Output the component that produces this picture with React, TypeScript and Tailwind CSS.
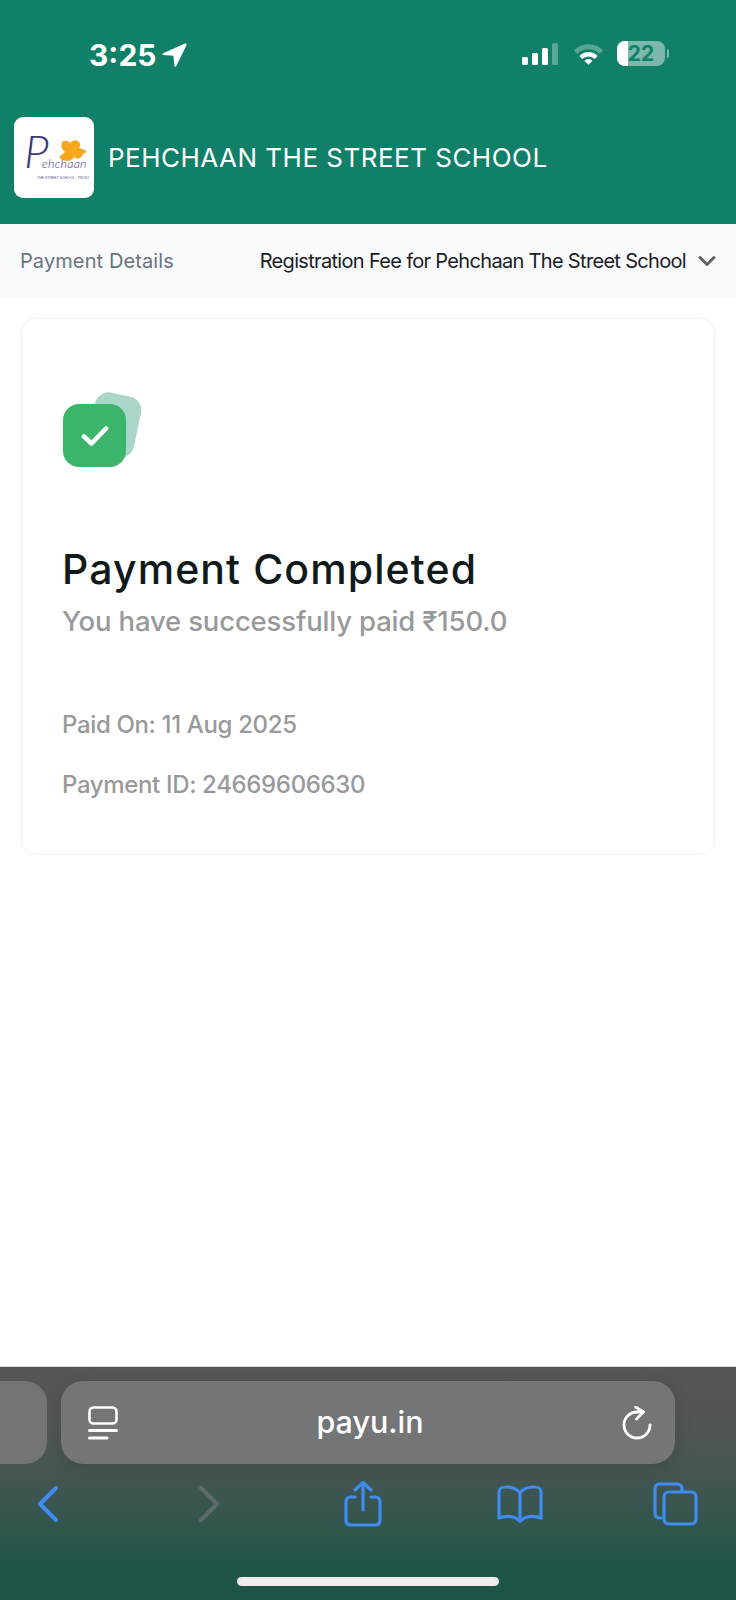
import { ChevronDown } from "lucide-react";

function NavArrow() {
  return (
    <svg width="25" height="25" viewBox="0 0 25 25" fill="white">
      <path d="M23 0.6 L1.2 10.2 Q-0.6 11.4 1.4 12 L11.4 12.8 L12.4 22.8 Q13 24.8 14.2 23.2 L24.6 2 Q25 0 23 0.6 Z" />
    </svg>
  );
}

function Signal() {
  return (
    <div className="mr-[2px] flex items-end gap-[4px]">
      <span className="h-[8px] w-[6px] rounded-[1.5px] bg-white" />
      <span className="h-[12px] w-[6px] rounded-[1.5px] bg-white" />
      <span className="h-[17px] w-[6px] rounded-[1.5px] bg-white" />
      <span className="h-[22px] w-[6px] rounded-[1.5px] bg-white/30" />
    </div>
  );
}

function Wifi() {
  return (
    <svg width="31" height="23" viewBox="0 0 32 23">
      <path d="M1 8.2 A21 21 0 0 1 31 8.2 L27.6 12 A16.4 16.4 0 0 0 4.4 12 Z" fill="white" fillOpacity="0.3" />
      <path d="M6.6 14 A13.2 13.2 0 0 1 25.4 14 L22.4 17.2 A9 9 0 0 0 9.6 17.2 Z" fill="white" />
      <path d="M11.8 19 A6 6 0 0 1 20.2 19 L16 23 Z" fill="white" />
    </svg>
  );
}

function Battery() {
  return (
    <div className="flex items-center gap-[2px]">
      <div className="relative flex h-[25px] w-[48px] items-center justify-center overflow-hidden rounded-[8px] bg-white/45">
        <span className="absolute inset-y-0 left-0 w-[11px] bg-white" />
        <span className="relative text-[21px] leading-none font-bold text-[#118069]">22</span>
      </div>
      <span className="h-[9px] w-[2px] rounded-r-full bg-white/45" />
    </div>
  );
}

function Logo() {
  return (
    <div className="relative h-[81px] w-[80px] shrink-0 overflow-hidden rounded-[9px] bg-white">
      <svg width="29" height="22" viewBox="0 0 29 22" className="absolute top-[23px] left-[44px]">
        <path
          d="M4 2 Q9 -1 12 3 Q15 -1 20 1 Q24 4 21 8 Q27 9 29 12 Q25 13 24 16 Q21 21 16 17 Q14 21 9 21 Q3 20 1 17 Q5 14 7 12 Q2 8 4 2 Z"
          fill="#f7a91d"
        />
      </svg>
      <p className="absolute top-[11px] left-[10px] font-['Lato',sans-serif] text-[12.5px] leading-none font-light tracking-[0.2px] whitespace-nowrap text-[#3d3a78] italic first-letter:mr-[-7px] first-letter:text-[46px]">
        Pehchaan
      </p>
      <span className="absolute top-[60px] left-[23px] font-['Liberation_Sans',sans-serif] text-[3.5px] leading-none whitespace-nowrap text-[#55527f]">
        THE STREET SCHOOL · TRUST
      </span>
    </div>
  );
}

function CheckBadge() {
  return (
    <div className="relative ml-[1px] h-[64px] w-[64px]">
      <div className="absolute top-[-10px] left-[28px] h-[62px] w-[47px] rotate-[12deg] rounded-[14px] bg-[#a9d5cb]" />
      <div className="relative flex h-[63px] w-[63px] items-center justify-center rounded-[16px] bg-[#3cb56c]">
        <svg width="28" height="22" viewBox="0 0 28 22" fill="none" stroke="white" strokeWidth="4.6" strokeLinecap="round" strokeLinejoin="round">
          <path d="M3 11.5 L10.5 18.5 L25 3.5" />
        </svg>
      </div>
    </div>
  );
}

function TabsIcon() {
  return (
    <svg width="30" height="34" viewBox="0 0 30 34" fill="none" stroke="white" strokeLinecap="round">
      <rect x="1.5" y="1.5" width="27" height="16" rx="4" strokeWidth="2.6" />
      <path d="M1.5 24.5 H28.5" strokeWidth="3" />
      <path d="M1.5 32 H19" strokeWidth="3" />
    </svg>
  );
}

function Reload() {
  return (
    <svg width="30" height="34" viewBox="0 0 30 34" fill="none" stroke="white" strokeWidth="2.8" strokeLinecap="round" strokeLinejoin="round">
      <path d="M21 6 H15 A13 13 0 1 0 28 19" />
      <path d="M13.5 1 L21.5 6 L14.5 13" />
    </svg>
  );
}

function Share() {
  return (
    <svg width="38" height="46" viewBox="0 0 38 46" fill="none" stroke="#3f8bef" strokeWidth="3.2" strokeLinecap="round" strokeLinejoin="round">
      <path d="M11 16 H7 Q2 16 2 21 V39 Q2 44 7 44 H31 Q36 44 36 39 V21 Q36 16 31 16 H27" />
      <path d="M19 29 V2" />
      <path d="M11 9 L19 1.5 L27 9" />
    </svg>
  );
}

function Book() {
  return (
    <svg width="46" height="38" viewBox="0 0 46 38" fill="none" stroke="#3f8bef" strokeWidth="3.2" strokeLinecap="round" strokeLinejoin="round">
      <path d="M23 8 C20 3 14 1.8 8 2 C4.5 2 2 4 2 7 V33 C9 30 18 31 23 36 C28 31 37 30 44 33 V7 C44 4 41.5 2 38 2 C32 1.8 26 3 23 8 Z" />
      <path d="M23 8 V36" />
    </svg>
  );
}

function Copy() {
  return (
    <svg width="45" height="44" viewBox="0 0 45 44" fill="none" stroke="#3f8bef" strokeWidth="3.2" strokeLinejoin="round">
      <path d="M9 36 H7 Q2 36 2 31 V7 Q2 2 7 2 H24 Q29 2 29 7 V9" />
      <rect x="11" y="10" width="32" height="32" rx="5" />
    </svg>
  );
}

function ChevronNav({ color, flip }: { color: string; flip?: boolean }) {
  return (
    <svg width="24" height="38" viewBox="0 0 24 38" fill="none" stroke={color} strokeWidth="4" strokeLinecap="round" strokeLinejoin="round">
      <path d={flip ? "M4 3 L20 19 L4 35" : "M20 3 L4 19 L20 35"} />
    </svg>
  );
}

export default function App() {
  return (
    <div className="flex h-[1600px] w-[736px] flex-col overflow-hidden bg-white font-['Inter',sans-serif]">
      <header className="flex h-[224px] shrink-0 flex-col bg-[#118069] text-white">
        <div className="flex h-[117px] items-start justify-between pt-[38px] pr-[67px] pl-[89px]">
          <div className="flex items-center gap-[6px]">
            <span className="text-[30px] leading-[34px] font-bold">3:25</span>
            <NavArrow />
          </div>
          <div className="flex items-center gap-[13px] pt-[3px]">
            <Signal />
            <Wifi />
            <Battery />
          </div>
        </div>
        <div className="flex items-center gap-[14px] pl-[14px]">
          <Logo />
          <span className="text-[26px] leading-none font-normal tracking-[0.48px]">PEHCHAAN THE STREET SCHOOL</span>
        </div>
      </header>

      <div className="flex h-[74px] shrink-0 items-center justify-between bg-[#f8fafc] pr-[15px] pl-[20px]">
        <span className="text-[20px] tracking-[0.1px] text-[#6b7280]">Payment Details</span>
        <div className="flex items-center gap-[7px]">
          <span className="text-[20px] tracking-[-0.68px] text-[#1b2024]">Registration Fee for Pehchaan The Street School</span>
          <ChevronDown size={28} strokeWidth={2.6} className="text-[#5f6368]" />
        </div>
      </div>

      <main className="flex-1 px-[21px] pt-[20px]">
        <section className="flex h-[537px] flex-col rounded-[14px] border border-[#eff1f3] bg-white pt-[85px] pl-[40px]">
          <CheckBadge />
          <h1 className="mt-[76px] text-[41px] leading-[50px] font-medium tracking-[1.1px] text-[#111a1a]">Payment Completed</h1>
          <p className="mt-[9px] text-[27.5px] leading-[36px] font-medium tracking-[-0.17px] text-[#98999b]">You have successfully paid ₹150.0</p>
          <p className="mt-[71px] text-[24px] leading-[30px] font-medium tracking-[-0.35px] text-[#98999b]">Paid On: 11 Aug 2025</p>
          <p className="mt-[30px] text-[24px] leading-[30px] font-medium tracking-[-0.35px] text-[#98999b]">Payment ID: 24669606630</p>
        </section>
      </main>

      <footer className="flex h-[233px] shrink-0 flex-col bg-gradient-to-b from-[#565659] via-[#4f5556] via-30% to-[#1f5549] to-85% shadow-[0_-1px_0_#d8d8d8]">
        <div className="flex gap-[14px] pt-[14px] pr-[61px]">
          <div className="h-[83px] w-[47px] shrink-0 rounded-r-[22px] bg-[#737477]" />
          <div className="flex h-[83px] flex-1 items-center justify-between rounded-[22px] bg-[#747577] pr-[23px] pl-[27px] shadow-[0_4px_18px_rgba(0,0,0,0.12)]">
            <TabsIcon />
            <span className="text-[30.5px] leading-none font-medium text-white">payu.in</span>
            <Reload />
          </div>
        </div>
        <div className="flex items-center pt-[17px] pl-[36px]">
          <ChevronNav color="#3f8bef" />
          <div className="ml-[137px]">
            <ChevronNav color="#5c6c6c" flip />
          </div>
          <div className="ml-[123px]">
            <Share />
          </div>
          <div className="ml-[115px]">
            <Book />
          </div>
          <div className="ml-[110px]">
            <Copy />
          </div>
        </div>
        <div className="flex justify-center pt-[50px]">
          <span className="h-[9px] w-[262px] rounded-full bg-[#ececec]" />
        </div>
      </footer>
    </div>
  );
}
